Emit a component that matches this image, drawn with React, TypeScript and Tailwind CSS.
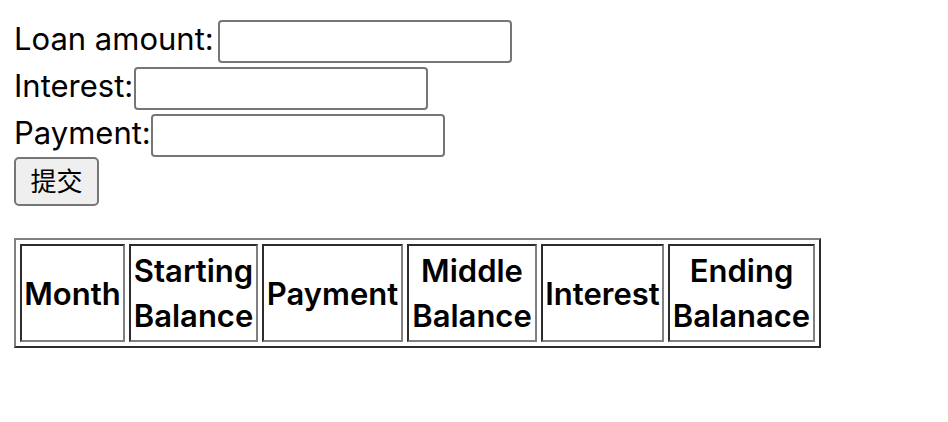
const fields = [
  { id: "amount", label: "Loan amount:", width: "w-[204px]" },
  { id: "interest", label: "Interest:", width: "w-[120px]" },
  { id: "payment", label: "Payment:", width: "w-[137px]" },
];

const columns = [
  { title: "Month", width: "w-[105px]" },
  { title: "Starting Balance", width: "w-[129px]" },
  { title: "Payment", width: "w-[141px]" },
  { title: "Middle Balance", width: "w-[130px]" },
  { title: "Interest", width: "w-[123px]" },
  { title: "Ending Balanace", width: "w-[147px]" },
];

export default function App() {
  return (
    <main className="bg-white px-3.5 pt-5 font-['Inter','Noto_Sans_CJK_SC',sans-serif] text-[31px] leading-[45px] text-black">
      <form onSubmit={(e) => e.preventDefault()}>
        <div className="flex flex-col gap-1">
          {fields.map((f) => (
            <div key={f.id} className="flex h-[43px] items-center">
              <label htmlFor={f.id} className={`${f.width} shrink-0 pb-1.5 whitespace-nowrap`}>
                {f.label}
              </label>
              <input
                id={f.id}
                type="text"
                className="h-[43px] w-[294px] rounded-[4px] border-2 border-[#767676] bg-white px-1 text-[26px]"
              />
            </div>
          ))}
        </div>
        <button
          type="submit"
          className="block h-[49px] w-[85px] rounded-[5px] border-2 border-[#767676] bg-[#efefef] text-center text-[26px] leading-[45px]"
        >
          提交
        </button>
      </form>
      <table className="mt-8 w-[807px] table-fixed border-separate border-spacing-1 border-2 border-t-[#808080] border-r-[#2c2c2c] border-b-[#2c2c2c] border-l-[#808080]">
        <thead>
          <tr>
            {columns.map((c) => (
              <th
                key={c.title}
                scope="col"
                className={`${c.width} border-2 border-t-[#2c2c2c] border-r-[#808080] border-b-[#808080] border-l-[#2c2c2c] px-0 py-0.5 text-center align-middle font-semibold`}
              >
                {c.title}
              </th>
            ))}
          </tr>
        </thead>
      </table>
    </main>
  );
}
